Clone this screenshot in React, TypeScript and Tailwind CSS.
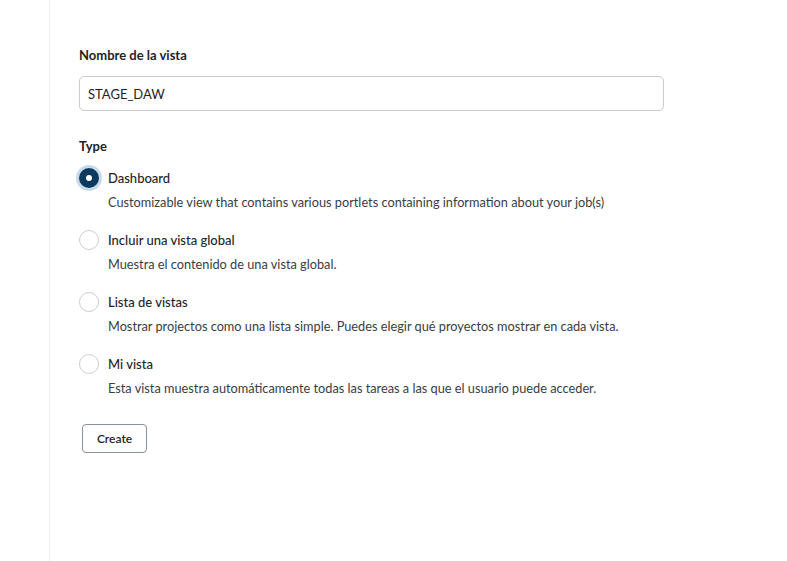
const options = [
  {
    label: 'Dashboard',
    desc: 'Customizable view that contains various portlets containing information about your job(s)',
    checked: true,
  },
  {
    label: 'Incluir una vista global',
    desc: 'Muestra el contenido de una vista global.',
    checked: false,
  },
  {
    label: 'Lista de vistas',
    desc: 'Mostrar projectos como una lista simple. Puedes elegir qué proyectos mostrar en cada vista.',
    checked: false,
  },
  {
    label: 'Mi vista',
    desc: 'Esta vista muestra automáticamente todas las tareas a las que el usuario puede acceder.',
    checked: false,
  },
]

function Radio({ checked }: { checked: boolean }) {
  if (checked) {
    return (
      <span className="w-[26px] h-[26px] rounded-full bg-[#c9dbe9] flex items-center justify-center shrink-0 -ml-[3px] -mr-[3px]">
        <span className="w-5 h-5 rounded-full bg-[#0c3a5e] flex items-center justify-center">
          <span className="w-[6px] h-[6px] rounded-full bg-white" />
        </span>
      </span>
    )
  }
  return <span className="w-5 h-5 rounded-full border border-[#c9ced4] bg-white shrink-0" />
}

export default function App() {
  return (
    <div className="min-h-[561px] bg-white flex text-[#1f2328]" style={{ fontFamily: 'Lato, "Noto Sans", sans-serif' }}>
      <div className="w-[50px] border-r border-[#ededed] shrink-0" />
      <div className="pl-[29px] pt-[45px] w-[614px]">
        <label className="block text-[13px] font-bold leading-5">Nombre de la vista</label>
        <input
          className="mt-[11px] w-[585px] h-[35px] border border-[#c7ccd1] rounded-[5px] px-[8px] text-[13px] text-[#1f2328] outline-none"
          defaultValue="STAGE_DAW"
        />
        <div className="mt-[25px] text-[13px] font-bold leading-5">Type</div>
        <div className="mt-[12px] flex flex-col gap-[18px]">
          {options.map(o => (
            <div key={o.label}>
              <div className="flex items-center gap-[9px] h-5">
                <Radio checked={o.checked} />
                <span className="text-[13px] font-medium leading-5">{o.label}</span>
              </div>
              <div className="ml-[29px] mt-[4px] text-[12.75px] leading-5 text-[#383d42]">{o.desc}</div>
            </div>
          ))}
        </div>
        <button className="mt-[26px] ml-[3px] w-[65px] h-[29px] border border-[#8a9199] rounded-[4px] text-[12px] font-semibold bg-white">
          Create
        </button>
      </div>
    </div>
  )
}
